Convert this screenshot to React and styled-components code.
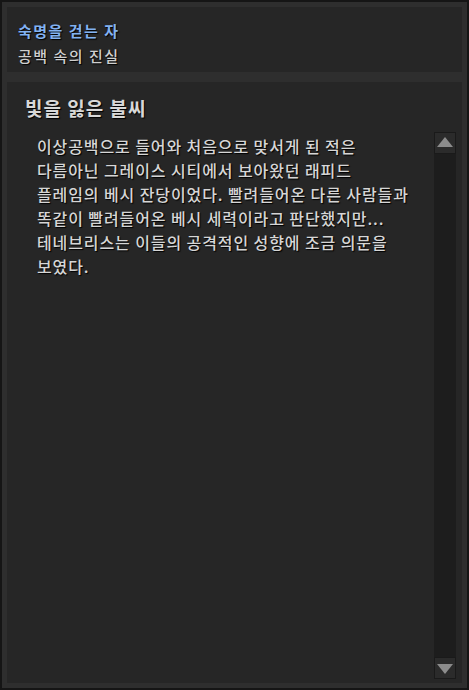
import styled, { createGlobalStyle } from 'styled-components';

const Global = createGlobalStyle`
    html, body {
        margin: 0;
        padding: 0;
        background: #151515;
    }
    * {
        box-sizing: border-box;
    }
`

const Frame = styled.div`
    width: 469px;
    height: 690px;
    border: 2px solid #151515;
    background: #2e2e2e;
    padding: 5px;
    display: flex;
    flex-direction: column;
    gap: 10px;
    font-family: "Noto Sans CJK KR", "Noto Sans", sans-serif;
`

const Header = styled.div`
    height: 65px;
    background: #262626;
    padding: 11px 11px 0;
    display: flex;
    flex-direction: column;
`

const Quest = styled.div`
    font-size: 15px;
    line-height: 25px;
    letter-spacing: 1.5px;
    font-weight: ${p => (p.$accent ? 700 : 500)};
    color: ${p => (p.$accent ? '#82b2f2' : '#cfcfcf')};
    text-shadow: 1px 1px 1px #000;
`

const Panel = styled.div`
    flex: 1;
    min-height: 0;
    background: #262626;
    padding: 12px 6px 4px 18px;
    display: flex;
    flex-direction: column;
`

const Heading = styled.h2`
    margin: 0 0 11px;
    font-size: 19px;
    line-height: 27px;
    letter-spacing: 1px;
    font-weight: 700;
    color: #d8d8d8;
    text-shadow: 1px 1px 1px #000;
`

const Row = styled.div`
    flex: 1;
    min-height: 0;
    display: flex;
    gap: 10px;
`

const Text = styled.p`
    flex: 1;
    margin: 0;
    padding: 2px 0 0 12px;
    font-size: 16px;
    line-height: 24px;
    letter-spacing: 0.9px;
    font-weight: 500;
    color: #d6d6d6;
    text-shadow: 1px 1px 1px #000;
    white-space: pre-line;
`

const Scrollbar = styled.div`
    width: 22px;
    background: #1d1d1d;
    display: flex;
    flex-direction: column;
    justify-content: space-between;
`

const Arrow = styled.div`
    width: 22px;
    height: 22px;
    background: #2b2b2b;
    border: 1px solid #1a1a1a;
    display: flex;
    align-items: center;
    justify-content: center;
    &::after {
        content: '';
        width: 0;
        height: 0;
        border-left: 8px solid transparent;
        border-right: 8px solid transparent;
        ${p => (p.$down
            ? 'border-top: 10px solid #8c8c8c; margin-top: 2px;'
            : 'border-bottom: 10px solid #8c8c8c; margin-top: -2px;')}
    }
`

const story = `이상공백으로 들어와 처음으로 맞서게 된 적은
다름아닌 그레이스 시티에서 보아왔던 래피드
플레임의 베시 잔당이었다. 빨려들어온 다른 사람들과
똑같이 빨려들어온 베시 세력이라고 판단했지만...
테네브리스는 이들의 공격적인 성향에 조금 의문을
보였다.`

const App = () => {
    return (
        <>
            <Global />
            <Frame>
                <Header>
                    <Quest $accent>숙명을 걷는 자</Quest>
                    <Quest>공백 속의 진실</Quest>
                </Header>
                <Panel>
                    <Heading>빛을 잃은 불씨</Heading>
                    <Row>
                        <Text>{story}</Text>
                        <Scrollbar>
                            <Arrow />
                            <Arrow $down />
                        </Scrollbar>
                    </Row>
                </Panel>
            </Frame>
        </>
    )
}

export default App;
